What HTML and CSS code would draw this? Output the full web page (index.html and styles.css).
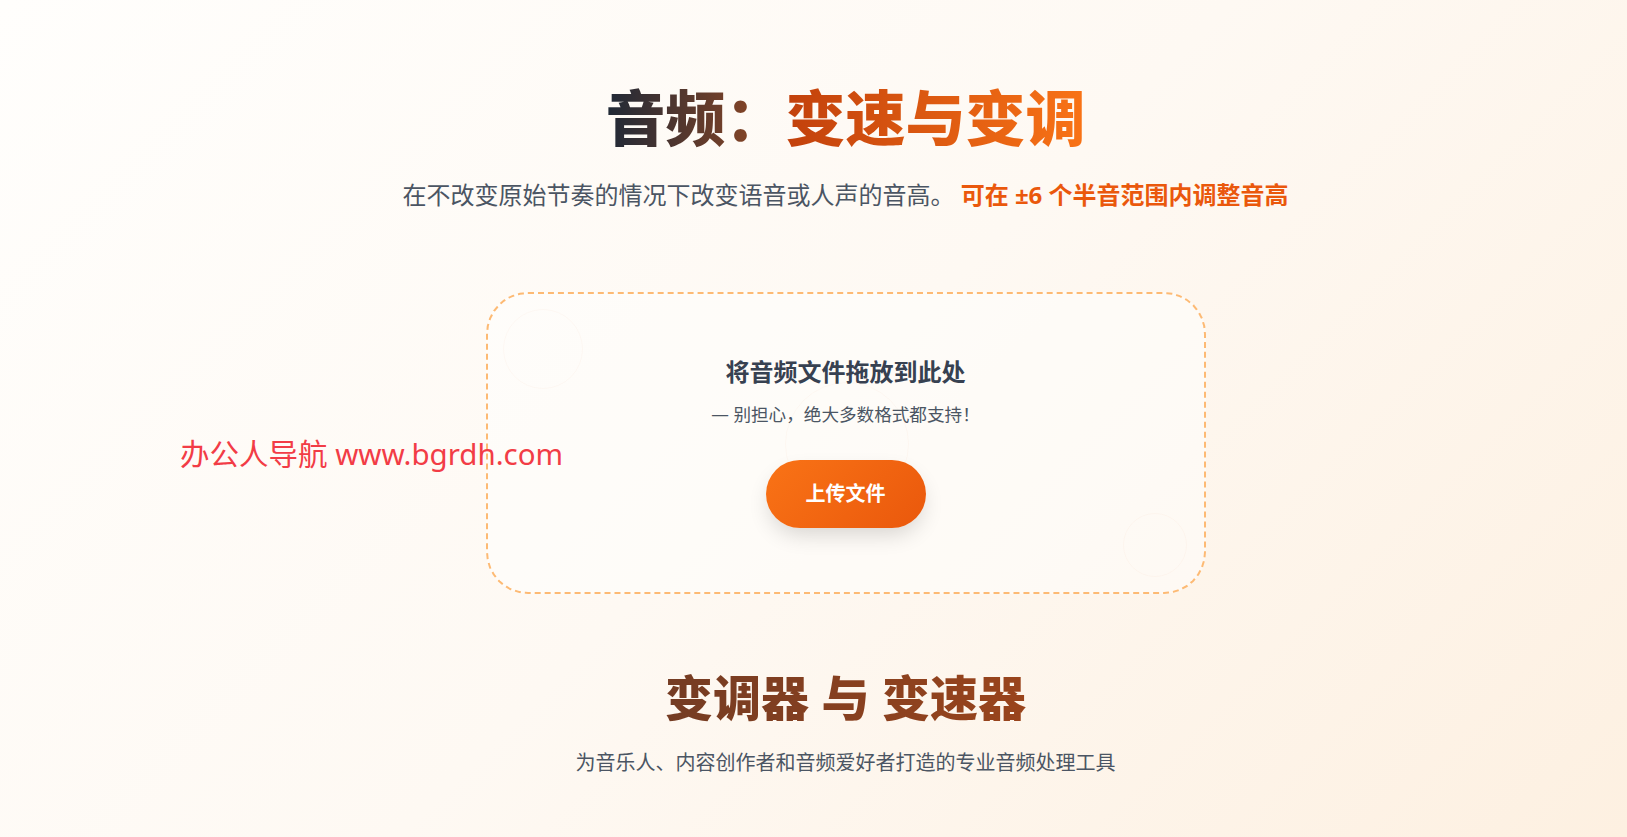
FILE: index.html
```html
<!DOCTYPE html>
<html lang="zh-CN">
<head>
    <meta charset="UTF-8">
    <meta name="viewport" content="width=device-width, initial-scale=1.0">
    <title>音频变速与变调</title>
    <link rel="stylesheet" href="styles.css">
</head>
<body>
    <div class="page">
        <main class="main">
            <section class="hero">
                <h1 class="hero-title">
                    <span class="title-dark">音频：</span><span class="title-accent">变速与变调</span>
                </h1>
                <p class="hero-desc">在不改变原始节奏的情况下改变语音或人声的音高。 <strong>可在 ±6 个半音范围内调整音高</strong></p>
            </section>

            <!-- 上传区域 -->
            <div class="dropzone">
                <span class="bubble bubble-1"></span>
                <span class="bubble bubble-2"></span>
                <span class="bubble bubble-3"></span>
                <h2 class="drop-title">将音频文件拖放到此处</h2>
                <p class="drop-hint">— 别担心，绝大多数格式都支持！</p>
                <button class="btn-upload">上传文件</button>
            </div>

            <section class="tools">
                <h2 class="tools-title">变调器 与 变速器</h2>
                <p class="tools-desc">为音乐人、内容创作者和音频爱好者打造的专业音频处理工具</p>
            </section>
        </main>

        <div class="watermark">办公人导航 www.bgrdh.com</div>
    </div>
</body>
</html>
```

FILE: styles.css
```css
:root {
    --orange: #f97316;
    --orange-dark: #ea580c;
    --text: #374151;
    --muted: #4b5563;
}

* {
    box-sizing: border-box;
    margin: 0;
    padding: 0;
}

body {
    font-family: 'Noto Sans', 'Noto Sans CJK SC', sans-serif;
    background: linear-gradient(135deg, #fffefc 0%, #fef9f3 50%, #fdf0e1 100%);
    color: var(--text);
    min-height: 100vh;
}

.page {
    position: relative;
    min-height: 100vh;
    padding-left: 64px;
}

.main {
    display: flex;
    flex-direction: column;
    align-items: center;
    padding-top: 82px;
}

.hero {
    text-align: center;
}

.hero-title {
    font-size: 60px;
    line-height: 72px;
    font-weight: 800;
}

.title-dark {
    background: linear-gradient(90deg, #1f2937, #9a4a22);
    -webkit-background-clip: text;
    background-clip: text;
    color: transparent;
}

.title-accent {
    background: linear-gradient(90deg, #c2410c, #f97316);
    -webkit-background-clip: text;
    background-clip: text;
    color: transparent;
}

.hero-desc {
    margin-top: 23px;
    font-size: 24px;
    line-height: 36px;
    color: var(--muted);
}

.hero-desc strong {
    color: var(--orange-dark);
    font-weight: 700;
}

.dropzone {
    position: relative;
    overflow: hidden;
    width: 720px;
    margin-top: 79px;
    padding: 61px 20px 64px;
    display: flex;
    flex-direction: column;
    align-items: center;
    text-align: center;
    background: rgba(255, 255, 255, 0.45);
    border: 2px dashed #fdba74;
    border-radius: 42px;
}

/* 背景里若隐若现的气泡 */
.bubble {
    position: absolute;
    border-radius: 50%;
    border: 1px solid rgba(234, 88, 12, 0.03);
}

.bubble-1 {
    left: 15px;
    top: 15px;
    width: 80px;
    height: 80px;
}

.bubble-2 {
    left: 635px;
    top: 219px;
    width: 64px;
    height: 64px;
}

.bubble-3 {
    left: 297px;
    top: 88px;
    width: 124px;
    height: 124px;
}

.drop-title {
    position: relative;
    font-size: 24px;
    line-height: 34px;
    font-weight: 700;
    color: var(--text);
}

.drop-hint {
    position: relative;
    margin-top: 12px;
    font-size: 17.6px;
    line-height: 26px;
    color: var(--muted);
}

.btn-upload {
    position: relative;
    margin-top: 33px;
    padding: 20px 40px;
    font-family: inherit;
    font-size: 20px;
    line-height: 28px;
    font-weight: 700;
    color: #fff;
    background: linear-gradient(135deg, var(--orange), var(--orange-dark));
    border: none;
    border-radius: 999px;
    box-shadow: 0 10px 22px -4px rgba(0, 0, 0, 0.16);
    cursor: pointer;
}

.tools {
    margin-top: 75px;
    text-align: center;
}

.tools-title {
    font-size: 48px;
    line-height: 58px;
    font-weight: 800;
    background: linear-gradient(90deg, #6b3a25, #a3461a);
    -webkit-background-clip: text;
    background-clip: text;
    color: transparent;
}

.tools-desc {
    margin-top: 20px;
    font-size: 20px;
    line-height: 32px;
    color: var(--muted);
}

.watermark {
    position: absolute;
    left: 180px;
    top: 434px;
    font-size: 29.5px;
    line-height: 40px;
    color: #f23c46;
}
```
